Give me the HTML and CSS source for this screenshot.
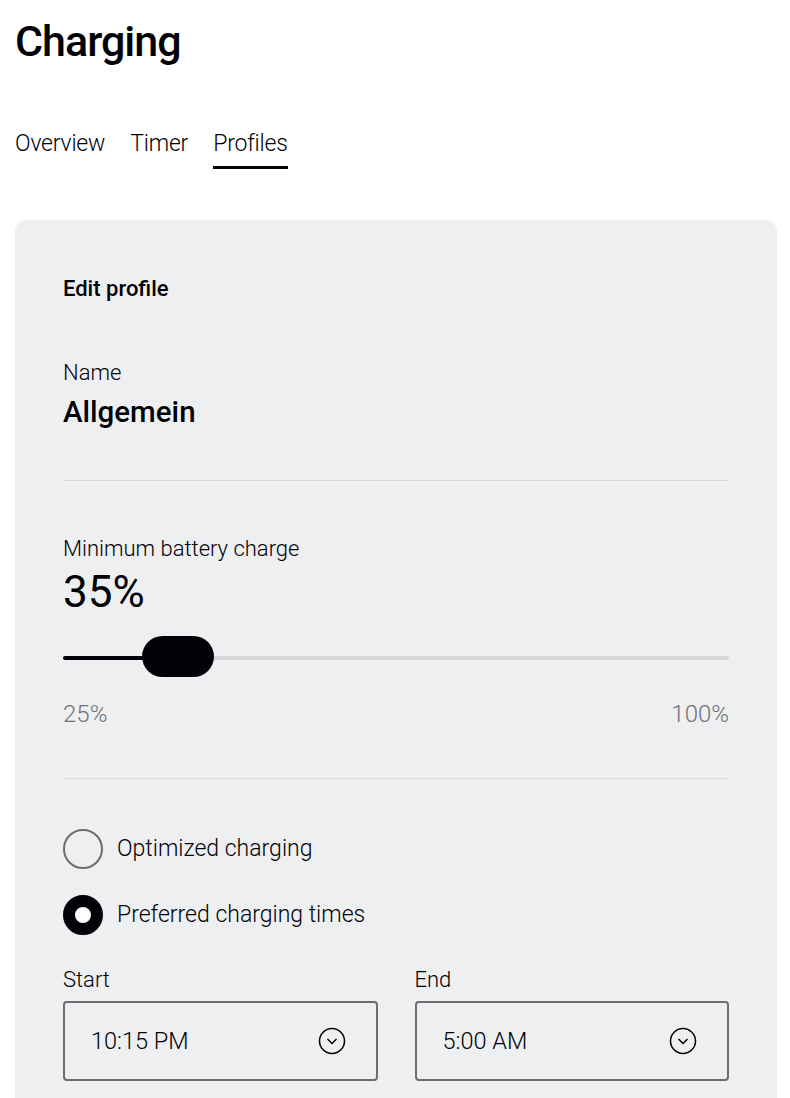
FILE: index.html
```html
<!DOCTYPE html>
<html lang="en" dir="ltr">

<head>
  <meta charset="utf-8">
  <title>Charging</title>
  <link rel="stylesheet" href="styles.css">
  <meta name="viewport" content="width=device-width, initial-scale=1.0">
</head>

<body>
  <h1 class="page-title">Charging</h1>
  <nav class="tabs">
    <a href="#">Overview</a>
    <a href="#">Timer</a>
    <a href="#" class="active">Profiles</a>
  </nav>

  <div class="card">
    <h2>Edit profile</h2>

    <div class="field">
      <span class="label">Name</span>
      <span class="value">Allgemein</span>
    </div>

    <hr class="divider">

    <div class="field">
      <span class="label">Minimum battery charge</span>
      <span class="value big">35%</span>
    </div>
    <div class="slider">
      <div class="track">
        <div class="fill"></div>
        <div class="thumb"></div>
      </div>
      <div class="range">
        <span>25%</span>
        <span>100%</span>
      </div>
    </div>

    <hr class="divider lower">

    <div class="options">
      <label class="radio"><span class="dot"></span>Optimized charging</label>
      <label class="radio checked"><span class="dot"></span>Preferred charging times</label>
    </div>

    <div class="times">
      <div class="time">
        <span class="label">Start</span>
        <div class="select">
          <span>10:15 PM</span>
          <svg width="28" height="28" viewBox="0 0 28 28" fill="none" stroke="#000" stroke-width="1.5">
            <circle cx="14" cy="14" r="12.5"/>
            <path d="M9.5 12l4.5 4.5 4.5-4.5"/>
          </svg>
        </div>
      </div>
      <div class="time">
        <span class="label">End</span>
        <div class="select">
          <span>5:00 AM</span>
          <svg width="28" height="28" viewBox="0 0 28 28" fill="none" stroke="#000" stroke-width="1.5">
            <circle cx="14" cy="14" r="12.5"/>
            <path d="M9.5 12l4.5 4.5 4.5-4.5"/>
          </svg>
        </div>
      </div>
    </div>
  </div>
</body>

</html>
```

FILE: styles.css
```css
* {
  margin: 0;
  padding: 0;
  box-sizing: border-box;
  font-family: Roboto, 'Liberation Sans', sans-serif;
}

body {
  background: #fff;
  color: #010205;
  padding: 0 13px 0 15px;
}

.page-title {
  font-size: 43px;
  font-weight: 500;
  line-height: 50px;
  padding-top: 16px;
  letter-spacing: -1px;
}

.tabs {
  display: flex;
  gap: 25px;
  margin-top: 63px;
}

.tabs a {
  color: #010205;
  text-decoration: none;
  font-size: 23px;
  font-weight: 300;
  line-height: 30px;
  padding-bottom: 7px;
  border-bottom: 3px solid transparent;
  letter-spacing: -0.2px;
}

.tabs a.active {
  border-bottom-color: #010205;
}

.card {
  margin-top: 51px;
  background: #eeeff1;
  border-radius: 12px;
  padding: 56px 48px 60px;
}

.card h2 {
  font-size: 22px;
  font-weight: 500;
  line-height: 26px;
}

.field {
  display: flex;
  flex-direction: column;
}

.card h2 + .field {
  margin-top: 58px;
}

.label {
  font-size: 22px;
  font-weight: 300;
  line-height: 26px;
}

.value {
  font-size: 29.5px;
  font-weight: 500;
  line-height: 40px;
  margin-top: 6px;
}

.value.big {
  font-size: 44px;
  font-weight: 400;
  line-height: 46px;
  margin-top: 7px;
}

.divider {
  border: none;
  border-top: 1px solid #d8d9dc;
  margin: 48px 0 55px;
}

.divider.lower {
  margin: 51px 0 52px;
}

.slider {
  margin-top: 41px;
}

.track {
  position: relative;
  height: 4px;
  background: #d6d7d9;
  border-radius: 2px;
  margin: 18px 0;
}

.fill {
  width: 14%;
  height: 100%;
  background: #010205;
  border-radius: 2px;
}

.thumb {
  position: absolute;
  left: 79px;
  top: -20px;
  width: 72px;
  height: 41px;
  border-radius: 21px;
  background: #010205;
}

.range {
  display: flex;
  justify-content: space-between;
  margin-top: 41px;
  font-size: 24px;
  font-weight: 300;
  color: #727376;
  line-height: 26px;
}

.options {
  display: flex;
  flex-direction: column;
  gap: 26px;
  margin-top: -2px;
}

.radio {
  display: flex;
  align-items: center;
  gap: 14px;
  font-size: 23px;
  font-weight: 300;
  line-height: 40px;
}

.dot {
  width: 40px;
  height: 40px;
  border-radius: 50%;
  border: 2px solid #6b6d70;
  background: transparent;
}

.radio.checked .dot {
  border: 12px solid #010205;
  background: #fff;
}

.times {
  display: grid;
  grid-template-columns: 1fr 1fr;
  gap: 37px;
  margin-top: 32px;
}

.time {
  display: flex;
  flex-direction: column;
  gap: 8px;
}

.select {
  display: flex;
  align-items: center;
  justify-content: space-between;
  height: 80px;
  border: 2.5px solid #6b6d70;
  border-radius: 4px;
  padding: 0 30px 0 26px;
  font-size: 23.5px;
  font-weight: 300;
}
```
